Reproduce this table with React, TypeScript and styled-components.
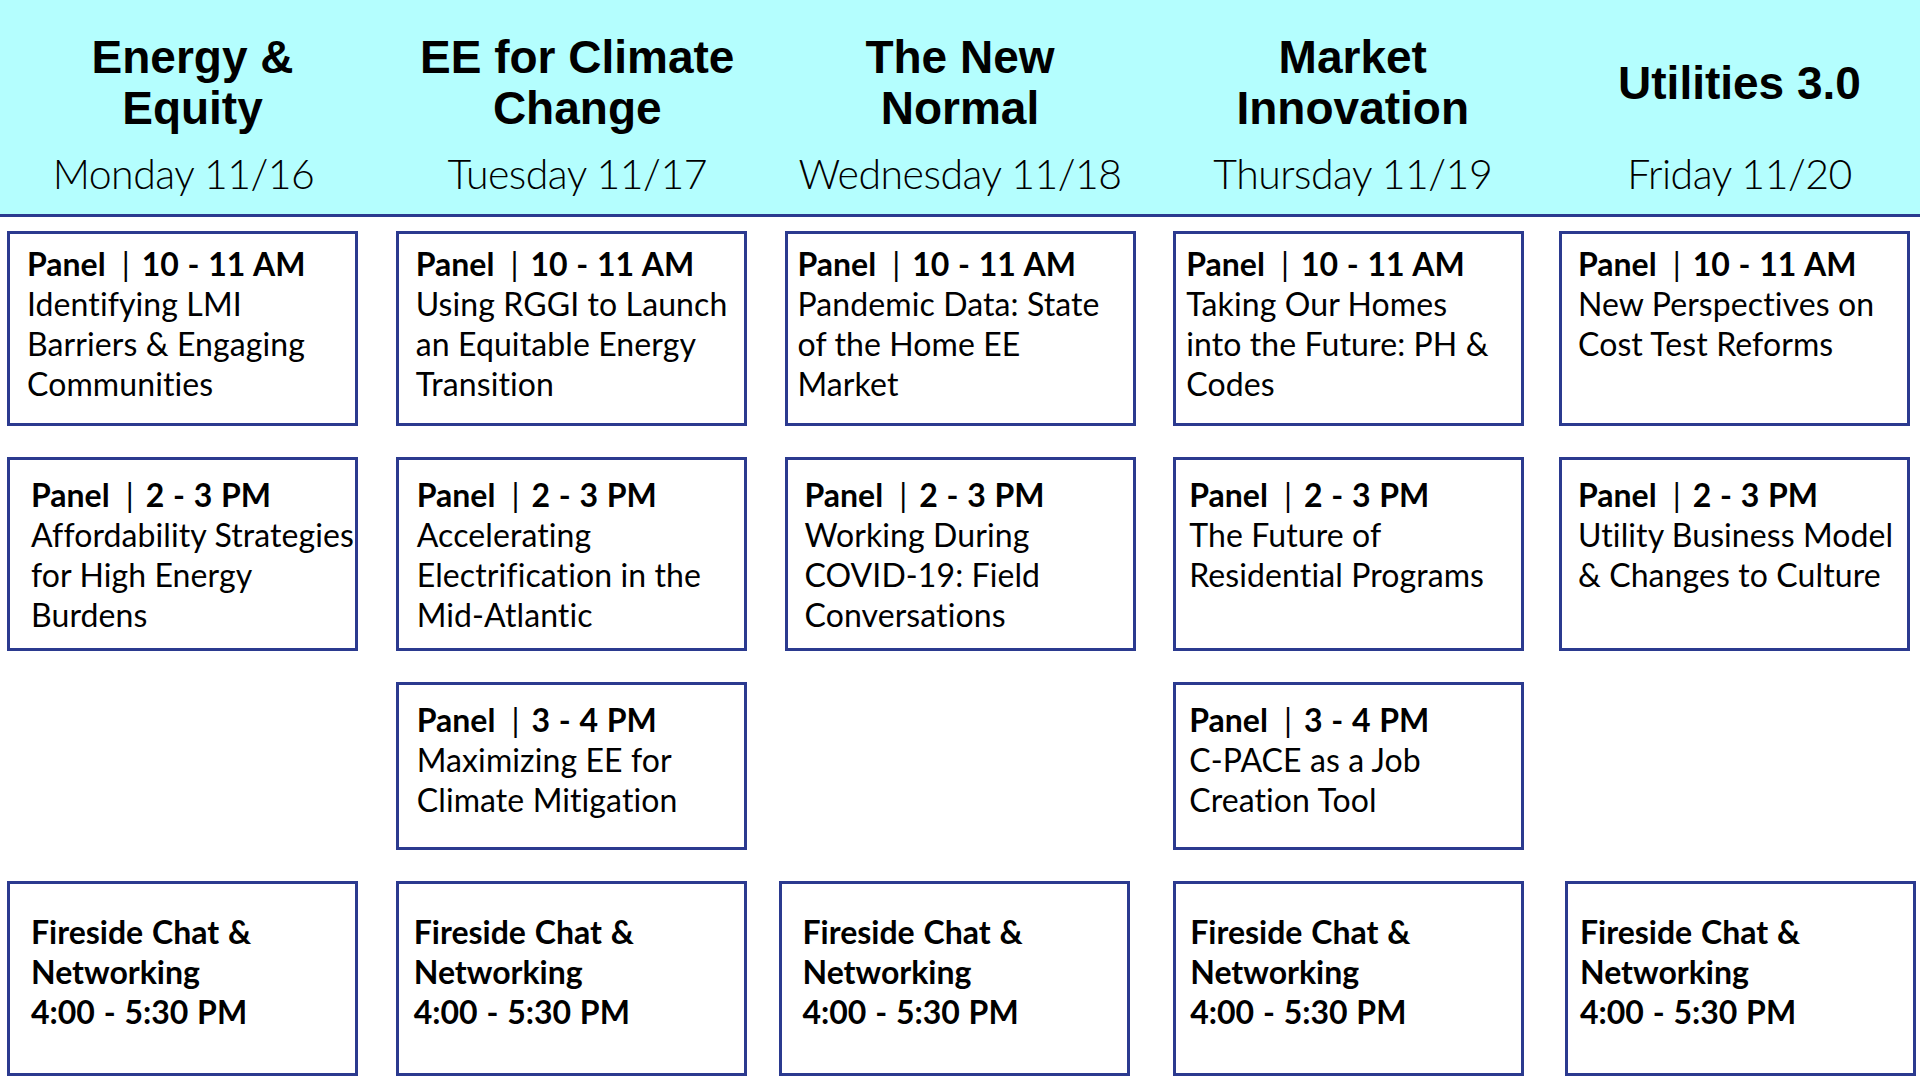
import styled, { createGlobalStyle } from "styled-components";

const GlobalStyle = createGlobalStyle`
  html, body {
    margin: 0;
    padding: 0;
    background: #ffffff;
  }
  body {
    width: 1920px;
    height: 1080px;
    overflow: hidden;
    font-family: Lato, "Open Sans", sans-serif;
    color: #000;
  }
`;

const Page = styled.div`
  width: 1920px;
  height: 1080px;
  display: flex;
  flex-direction: column;
`;

const Header = styled.header`
  height: 217px;
  background: #b4fefe;
  border-bottom: 3px solid #2b3a8f;
  display: grid;
  grid-template-columns: repeat(5, 351px);
  column-gap: 37.75px;
  padding: 32px 0 0 7px;
  box-sizing: border-box;
`;

const HeadCol = styled.div<{ $shift?: number }>`
  display: flex;
  flex-direction: column;
  align-items: center;
  transform: translateX(${(p) => p.$shift ?? 0}px);
`;

const Track = styled.div`
  height: 102px;
  display: flex;
  align-items: center;
  justify-content: center;
  text-align: center;
  font-family: "Liberation Sans", Arial, sans-serif;
  font-weight: 700;
  font-size: 46px;
  line-height: 51px;
  white-space: nowrap;
`;

const Day = styled.div<{ $shift?: number }>`
  margin-top: 16px;
  font-family: Lato, sans-serif;
  font-weight: 300;
  font-size: 41px;
  line-height: 48px;
  letter-spacing: -0.5px;
  white-space: nowrap;
  transform: translateX(${(p) => p.$shift ?? 0}px);
`;

const Grid = styled.main`
  display: grid;
  grid-template-columns: repeat(5, 351px);
  grid-template-rows: 195px 194px 168px 195px;
  column-gap: 37.75px;
  row-gap: 31px;
  padding: 14px 0 0 7px;
`;

const Card = styled.div<{ $col: number; $row: number; $top: number; $left?: number; $nudge?: number; $center?: boolean }>`
  grid-column: ${(p) => p.$col};
  grid-row: ${(p) => p.$row};
  border: 3px solid #2b3a8f;
  box-sizing: border-box;
  padding: ${(p) => p.$top}px 0 0 ${(p) => p.$left ?? 17}px;
  margin-left: ${(p) => p.$nudge ?? 0}px;
  margin-right: ${(p) => -(p.$nudge ?? 0)}px;
  display: flex;
  flex-direction: column;
  justify-content: ${(p) => (p.$center ? "center" : "flex-start")};
  ${(p) => (p.$center ? "padding-top: 0; padding-bottom: 14px;" : "")}
`;

const Heading = styled.div`
  font-weight: 700;
  font-size: 32px;
  line-height: 40px;
  word-spacing: 1px;
  white-space: nowrap;
`;

const Pipe = styled.span`
  font-weight: 400;
  margin: 0 12px 0 16px;
`;

const Line = styled.div`
  font-size: 32px;
  line-height: 40px;
  letter-spacing: 0.1px;
  white-space: nowrap;
`;

type Session = {
  col: number;
  row: number;
  time: string;
  lines: string[];
  top: number;
  left?: number;
  nudge?: number;
};

const tracks = [
  { title: ["Energy &", "Equity"], day: "Monday 11/16", shift: 10, dayShift: -9 },
  { title: ["EE for Climate", "Change"], day: "Tuesday 11/17", shift: 6, dayShift: 0 },
  { title: ["The New", "Normal"], day: "Wednesday 11/18", shift: 0, dayShift: 0 },
  { title: ["Market", "Innovation"], day: "Thursday 11/19", shift: 4, dayShift: 0 },
  { title: ["Utilities 3.0"], day: "Friday 11/20", shift: 2, dayShift: 0 },
];

const sessions: Session[] = [
  { col: 1, row: 1, time: "10 - 11 AM", lines: ["Identifying LMI", "Barriers & Engaging", "Communities"], top: 10 },
  { col: 1, row: 2, time: "2 - 3 PM", lines: ["Affordability Strategies", "for High Energy", "Burdens"], top: 15, left: 21 },
  { col: 2, row: 1, time: "10 - 11 AM", lines: ["Using RGGI to Launch", "an Equitable Energy", "Transition"], top: 10 },
  { col: 2, row: 2, time: "2 - 3 PM", lines: ["Accelerating", "Electrification in the", "Mid-Atlantic"], top: 15, left: 18 },
  { col: 2, row: 3, time: "3 - 4 PM", lines: ["Maximizing EE for", "Climate Mitigation"], top: 15, left: 18 },
  { col: 3, row: 1, time: "10 - 11 AM", lines: ["Pandemic Data: State", "of the Home EE", "Market"], top: 10, left: 10 },
  { col: 3, row: 2, time: "2 - 3 PM", lines: ["Working During", "COVID-19: Field", "Conversations"], top: 15, left: 17 },
  { col: 4, row: 1, time: "10 - 11 AM", lines: ["Taking Our Homes", "into the Future: PH &", "Codes"], top: 10, left: 10 },
  { col: 4, row: 2, time: "2 - 3 PM", lines: ["The Future of", "Residential Programs"], top: 15, left: 13 },
  { col: 4, row: 3, time: "3 - 4 PM", lines: ["C-PACE as a Job", "Creation Tool"], top: 15, left: 13 },
  { col: 5, row: 1, time: "10 - 11 AM", lines: ["New Perspectives on", "Cost Test Reforms"], top: 10, left: 16, nudge: -3 },
  { col: 5, row: 2, time: "2 - 3 PM", lines: ["Utility Business Model", "& Changes to Culture"], top: 15, left: 16, nudge: -3 },
];

const firesides = [
  { col: 1, left: 21, nudge: 0 },
  { col: 2, left: 15, nudge: 0 },
  { col: 3, left: 21, nudge: -6 },
  { col: 4, left: 14, nudge: 0 },
  { col: 5, left: 12, nudge: 3 },
];

const App = () => {
  return (
    <Page>
      <GlobalStyle />
      <Header>
        {tracks.map((t) => (
          <HeadCol key={t.day} $shift={t.shift}>
            <Track>
              <div>
                {t.title.map((l) => (
                  <div key={l}>{l}</div>
                ))}
              </div>
            </Track>
            <Day $shift={t.dayShift}>{t.day}</Day>
          </HeadCol>
        ))}
      </Header>

      <Grid>
        {sessions.map((s) => (
          <Card
            key={`${s.col}-${s.row}`}
            $col={s.col}
            $row={s.row}
            $top={s.top}
            $left={s.left}
            $nudge={s.nudge}
          >
            <Heading>
              Panel<Pipe>|</Pipe>
              {s.time}
            </Heading>
            {s.lines.map((l) => (
              <Line key={l}>{l}</Line>
            ))}
          </Card>
        ))}
        {firesides.map((f) => (
          <Card key={`fire-${f.col}`} $col={f.col} $row={4} $top={0} $left={f.left} $nudge={f.nudge} $center>
            <Heading>Fireside Chat &amp;</Heading>
            <Heading>Networking</Heading>
            <Heading>4:00 - 5:30 PM</Heading>
          </Card>
        ))}
      </Grid>
    </Page>
  );
};

export default App;
